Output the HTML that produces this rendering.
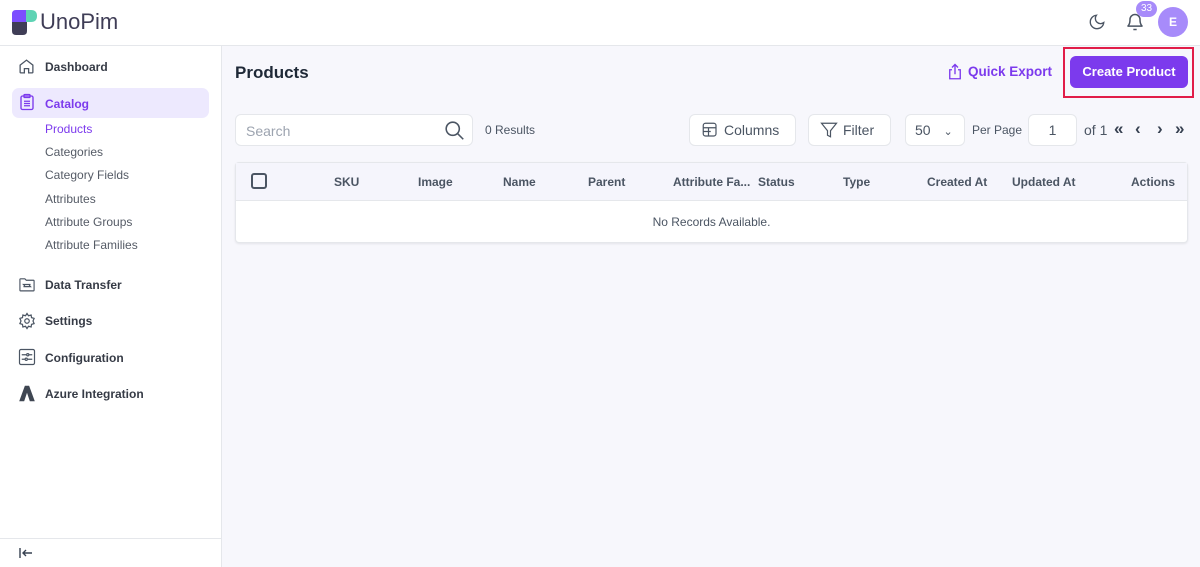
<!DOCTYPE html>
<html><head><meta charset="utf-8"><style>
*{box-sizing:border-box;margin:0;padding:0}
body{width:1200px;height:567px;overflow:hidden;font-family:"Liberation Sans",sans-serif;background:#f7f7fc;position:relative;color:#374151}
.top{position:absolute;left:0;top:0;width:1200px;height:46px;background:#fff;border-bottom:1px solid #e5e7eb}
.side{position:absolute;left:0;top:46px;width:222px;height:521px;background:#fff;border-right:1px solid #e5e7eb}
.abs{position:absolute}
.nav{position:absolute;left:45px;font-size:12px;font-weight:bold;color:#363b46}
.sub{position:absolute;left:45px;font-size:12px;color:#555b66}
.ico{position:absolute;left:18px}
.btn{position:absolute;background:#fff;border:1px solid #e5e7eb;border-radius:6px;font-size:14px;color:#4b5563}
.th{position:absolute;top:175px;font-size:12px;font-weight:bold;color:#4b5563}
.pg{position:absolute;top:119px;font-size:17px;font-weight:bold;color:#374151}
</style></head><body>
<div class="top"></div>
<svg class="abs" style="left:11px;top:9px" width="27" height="27" viewBox="0 0 27 27"><path d="M1 12 H16 V22 Q16 26 12 26 H5 Q1 26 1 22 Z" fill="#3f3d56"/><path d="M5 1 H16 V13 H1 V5 Q1 1 5 1 Z" fill="#7c4dff"/><path d="M15 1 H20 Q26 1 26 7 Q26 13 20 13 H15 Z" fill="#5ed3b4"/></svg>
<div class="abs" style="left:40px;top:9px;font-size:22px;color:#3f3d56">UnoPim</div>
<svg class="abs" style="left:1088px;top:13px" width="18" height="18" viewBox="0 0 24 24" fill="none" stroke="#4b5563" stroke-width="1.8"><path d="M21 12.8A9 9 0 1 1 11.2 3a7 7 0 0 0 9.8 9.8z"/></svg>
<svg class="abs" style="left:1125px;top:12px" width="20" height="20" viewBox="0 0 24 24" fill="none" stroke="#4b5563" stroke-width="1.8"><path d="M6 9a6 6 0 0 1 12 0c0 7 3 8 3 8H3s3-1 3-8"/><path d="M10 21h4"/></svg>
<div class="abs" style="left:1136px;top:1px;width:21px;height:16px;border-radius:8px;background:#a78bfa;color:#fff;font-size:10px;text-align:center;line-height:16px">33</div>
<div class="abs" style="left:1158px;top:7px;width:30px;height:30px;border-radius:50%;background:#a78bfa;color:#fff;font-size:12px;font-weight:bold;text-align:center;line-height:30px">E</div>

<div class="side"></div>
<svg class="ico" style="top:58px" width="17" height="17" viewBox="0 0 24 24" fill="none" stroke="#4b5563" stroke-width="1.8"><path d="M3 10L12 3l9 7v10a1 1 0 0 1-1 1h-5v-6H9v6H4a1 1 0 0 1-1-1z"/></svg>
<div class="nav" style="top:60px">Dashboard</div>
<div class="abs" style="left:12px;top:88px;width:197px;height:30px;background:#ede9fe;border-radius:7px"></div>
<svg class="ico" style="top:93px" width="18" height="18" viewBox="0 0 24 24" fill="none" stroke="#7c3aed" stroke-width="1.8"><rect x="4" y="4" width="16" height="18" rx="2"/><rect x="8" y="2" width="8" height="4" rx="1"/><path d="M8 11h8M8 14h8M8 17h8"/></svg>
<div class="nav" style="top:97px;color:#7c3aed">Catalog</div>
<div class="sub" style="top:122px;color:#7c3aed">Products</div>
<div class="sub" style="top:145px">Categories</div>
<div class="sub" style="top:168px">Category Fields</div>
<div class="sub" style="top:192px">Attributes</div>
<div class="sub" style="top:215px">Attribute Groups</div>
<div class="sub" style="top:238px">Attribute Families</div>
<svg class="ico" style="top:276px" width="18" height="17" viewBox="0 0 24 24" fill="none" stroke="#4b5563" stroke-width="1.6"><path d="M2 5a1 1 0 0 1 1-1h6l2 2h10a1 1 0 0 1 1 1v13a1 1 0 0 1-1 1H3a1 1 0 0 1-1-1z"/><path d="M7 15h10l-2-2M17 12H7l2 2"/></svg>
<div class="nav" style="top:278px">Data Transfer</div>
<svg class="ico" style="top:312px" width="18" height="18" viewBox="0 0 24 24" fill="none" stroke="#4b5563" stroke-width="1.6"><circle cx="12" cy="12" r="3"/><path d="M12 2l2 3 3.5-1 .5 3.5 3.5 1-1.5 3.5 1.5 3.5-3.5 1-.5 3.5-3.5-1-2 3-2-3-3.5 1-.5-3.5-3.5-1L4 12 2.5 8.5l3.5-1 .5-3.5 3.5 1z"/></svg>
<div class="nav" style="top:314px">Settings</div>
<svg class="ico" style="top:348px" width="18" height="18" viewBox="0 0 24 24" fill="none" stroke="#4b5563" stroke-width="1.6"><rect x="2" y="2" width="20" height="20" rx="2"/><path d="M5 9h6M15 9h4M5 15h4M13 15h6"/><circle cx="13" cy="9" r="1.5"/><circle cx="11" cy="15" r="1.5"/></svg>
<div class="nav" style="top:351px">Configuration</div>
<svg class="ico" style="top:385px" width="18" height="17" viewBox="0 0 24 24"><path d="M9 1h6l8 22h-7l-4-12-4 12H1z" fill="#3f4652"/></svg>
<div class="nav" style="top:387px">Azure Integration</div>
<div class="abs" style="left:0;top:538px;width:222px;border-top:1px solid #e5e7eb"></div>
<svg class="abs" style="left:19px;top:547px" width="14" height="12" viewBox="0 0 14 12" fill="none" stroke="#374151" stroke-width="1.4"><path d="M1 1v10M13 6H4M7 3L4 6l3 3"/></svg>

<div class="abs" style="left:235px;top:63px;font-size:17px;font-weight:bold;color:#1f2937">Products</div>
<svg class="abs" style="left:946px;top:63px" width="18" height="18" viewBox="0 0 24 24" fill="none" stroke="#7c3aed" stroke-width="1.8"><path d="M8 9H5v12h14V9h-3M12 15V2M8 6l4-4 4 4"/></svg>
<div class="abs" style="left:968px;top:64px;font-size:13.5px;font-weight:bold;color:#7c3aed">Quick Export</div>
<div class="abs" style="left:1063px;top:47px;width:131px;height:51px;border:2px solid #e11d48"></div>
<div class="abs" style="left:1070px;top:56px;width:118px;height:32px;background:#7c3aed;border-radius:6px;color:#fff;font-size:13px;font-weight:bold;text-align:center;line-height:32px">Create Product</div>

<div class="btn" style="left:235px;top:114px;width:238px;height:32px;color:#9ca3af;padding:8px 10px">Search</div>
<svg class="abs" style="left:444px;top:120px" width="21" height="21" viewBox="0 0 24 24" fill="none" stroke="#4b5563" stroke-width="1.8"><circle cx="10" cy="10" r="7.5"/><path d="M15.5 15.5L22 22"/></svg>
<div class="abs" style="left:485px;top:123px;font-size:12px;color:#4b5563">0 Results</div>
<div class="btn" style="left:689px;top:114px;width:107px;height:32px;padding:7px 0 0 34px">Columns</div>
<svg class="abs" style="left:701px;top:121px" width="18" height="18" viewBox="0 0 24 24" fill="none" stroke="#4b5563" stroke-width="1.6"><rect x="3" y="3" width="17" height="17" rx="3"/><path d="M3 9h17M3 14h10M10 9v11"/></svg>
<div class="btn" style="left:808px;top:114px;width:83px;height:32px;padding:7px 0 0 34px">Filter</div>
<svg class="abs" style="left:820px;top:121px" width="18" height="18" viewBox="0 0 24 24" fill="none" stroke="#4b5563" stroke-width="1.6"><path d="M2 3h20l-8 10v8l-4-2v-6z"/></svg>
<div class="btn" style="left:905px;top:114px;width:60px;height:32px;padding:7px 0 0 9px">50 <span style="font-size:11px;margin-left:9px">&#8964;</span></div>
<div class="abs" style="left:972px;top:123px;font-size:12px;color:#4b5563">Per Page</div>
<div class="btn" style="left:1028px;top:114px;width:49px;height:32px;text-align:center;padding-top:7px">1</div>
<div class="abs" style="left:1084px;top:122px;font-size:14px;color:#4b5563">of 1</div>
<div class="pg" style="left:1114px">«</div>
<div class="pg" style="left:1135px">‹</div>
<div class="pg" style="left:1157px">›</div>
<div class="pg" style="left:1175px">»</div>

<div class="abs" style="left:235px;top:162px;width:953px;height:81px;background:#fff;border:1px solid #e5e7eb;border-radius:4px;box-shadow:0 1px 2px rgba(0,0,0,.08)"></div>
<div class="abs" style="left:236px;top:163px;width:951px;height:38px;background:#f5f5fc;border-bottom:1px solid #e5e7eb"></div>
<div class="abs" style="left:251px;top:173px;width:16px;height:16px;border:2px solid #4b5563;border-radius:3px"></div>
<div class="th" style="left:334px">SKU</div>
<div class="th" style="left:418px">Image</div>
<div class="th" style="left:503px">Name</div>
<div class="th" style="left:588px">Parent</div>
<div class="th" style="left:673px">Attribute Fa...</div>
<div class="th" style="left:758px">Status</div>
<div class="th" style="left:843px">Type</div>
<div class="th" style="left:927px">Created At</div>
<div class="th" style="left:1012px">Updated At</div>
<div class="th" style="left:1131px">Actions</div>
<div class="abs" style="left:236px;top:215px;width:951px;text-align:center;font-size:12px;color:#4b5563">No Records Available.</div>
</body></html>
